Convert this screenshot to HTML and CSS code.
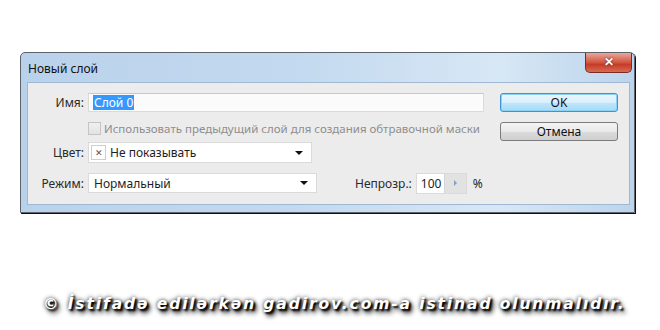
FILE: index.html
```html
<html lang="ru">
	<head>
		<meta charset="UTF-8">
		<meta name="viewport" content="width=device-width, initial-scale=1">
		<title>Новый слой</title>
		<link rel="stylesheet" href="styles.css">
	</head>
	<body>
		<div class="window">
			<div class="titlebar">
				<span class="title">Новый слой</span>
				<span class="close">&#x2715;</span>
			</div>
			<div class="client">
				<div class="form">
					<div class="row row-name">
						<label class="lbl" for="name">Имя:</label>
						<div class="field name-field" id="name"><span class="sel">Слой 0</span></div>
					</div>
					<div class="row row-check">
						<span class="lbl"></span>
						<span class="check"></span>
						<span class="check-text">Использовать предыдущий слой для создания обтравочной маски</span>
					</div>
					<div class="row row-color">
						<span class="lbl">Цвет:</span>
						<div class="field select color-select">
							<span class="swatch">&#x2715;</span>
							<span class="value">Не показывать</span>
							<span class="arrow"></span>
						</div>
					</div>
					<div class="row row-mode">
						<span class="lbl">Режим:</span>
						<div class="field select mode-select">
							<span class="value">Нормальный</span>
							<span class="arrow"></span>
						</div>
						<span class="op-lbl">Непрозр.:</span>
						<div class="field opacity">
							<span class="num">100</span>
							<span class="step"><span class="tri"></span></span>
						</div>
						<span class="pct">%</span>
					</div>
				</div>
				<div class="buttons">
					<button class="btn btn-ok" type="button">OK</button>
					<button class="btn" type="button">Отмена</button>
				</div>
			</div>
		</div>
		<p class="mark">© İstifadə edilərkən gadirov.com-a istinad olunmalıdır.</p>
	</body>
</html>
```

FILE: styles.css
```css
body {
	margin: 0;
	background: #fff;
	font-family: "Noto Sans", sans-serif;
	font-size: 12px;
	color: #1e1e1e;
}
.window {
	width: 613px;
	height: 159px;
	margin: 52px 0 0 20px;
	border: 1px solid #5e636b;
	border-radius: 5px 5px 0 0;
	background: linear-gradient(to right, #b9d2eb, #c3d9ef 45%, #d7e7f5 78%, #bcd4ec);
	box-shadow: 1px 1px 0 #111;
	display: flex;
	flex-direction: column;
}
.titlebar {
	height: 29px;
	display: flex;
	align-items: flex-start;
	justify-content: space-between;
}
.title {
	margin: 7px 0 0 7px;
	font-size: 12px;
	color: #111;
}
.close {
	width: 45px;
	height: 19px;
	margin-right: 2px;
	border: 1px solid #7a2c24;
	border-top: 0;
	border-radius: 0 0 5px 5px;
	background: linear-gradient(#e9a79c, #d2553f 50%, #c43c27 60%, #d86a52);
	color: #fff;
	font-size: 12px;
	font-weight: bold;
	text-align: center;
	line-height: 18px;
	text-shadow: 0 0 2px #5a1a12;
}
.client {
	flex: 1;
	margin: 0 4px 7px 6px;
	border: 1px solid #9fb8d3;
	background: #ececec;
	display: flex;
}
.form {
	padding-top: 10px;
	width: 456px;
}
.row {
	display: flex;
	align-items: center;
}
.lbl {
	flex-shrink: 0;
	width: 56px;
	margin-right: 4px;
	text-align: right;
	color: #2a2a2a;
}
.field {
	flex-shrink: 0;
	background: #fff;
	border: 1px solid #dadada;
	box-sizing: border-box;
	display: flex;
	align-items: center;
}
.row-name {
	height: 19px;
}
.name-field {
	width: 396px;
	height: 19px;
	border-top-color: #c8c8c8;
	background: #fbfbfb;
	padding-left: 4px;
}
.sel {
	background: #3399ff;
	color: #fff;
	padding: 0 1px;
	line-height: 15px;
}
.row-check {
	height: 14px;
	margin-top: 9px;
}
.check {
	flex-shrink: 0;
	width: 11px;
	height: 11px;
	border: 1px solid #c4c4c4;
	background: linear-gradient(#f1f1f1, #e2e2e2);
	margin-right: 3px;
}
.check-text {
	font-size: 11.5px;
	color: #8e8e8e;
	white-space: nowrap;
}
.row-color {
	height: 21px;
	margin-top: 7px;
}
.select {
	height: 21px;
	padding: 0 8px 0 5px;
}
.color-select {
	width: 224px;
	padding-left: 2px;
}
.swatch {
	width: 13px;
	height: 13px;
	border: 1px solid #cfcfcf;
	font-size: 9px;
	line-height: 13px;
	text-align: center;
	color: #555;
	margin-right: 4px;
}
.value {
	flex: 1;
}
.arrow {
	width: 0;
	height: 0;
	border-left: 4px solid transparent;
	border-right: 4px solid transparent;
	border-top: 4px solid #111;
}
.row-mode {
	height: 20px;
	margin-top: 10px;
}
.mode-select {
	width: 229px;
	height: 20px;
}
.op-lbl {
	margin-left: 38px;
	margin-right: 4px;
	color: #2a2a2a;
}
.opacity {
	width: 51px;
	height: 21px;
}
.num {
	flex: 1;
	padding-left: 4px;
}
.step {
	width: 21px;
	height: 19px;
	background: #e2e2e2;
	border-left: 1px solid #d4d4d4;
	display: flex;
	align-items: center;
	justify-content: center;
}
.tri {
	border-top: 3px solid transparent;
	border-bottom: 3px solid transparent;
	border-left: 3px solid #8aa0c0;
}
.pct {
	margin-left: 6px;
}
.buttons {
	padding: 10px 0 0 16px;
	display: flex;
	flex-direction: column;
	gap: 10px;
}
.btn {
	width: 118px;
	height: 19px;
	padding: 0;
	border: 1px solid #7b7b7b;
	border-radius: 3px;
	background: linear-gradient(#f4f4f4, #e9e9e9 50%, #dadada 52%, #cfcfcf);
	font-family: "Noto Sans", sans-serif;
	font-size: 12px;
	color: #111;
}
.btn-ok {
	border-color: #3c94d0;
	box-shadow: inset 0 0 0 1px #8ad3f6;
	background: linear-gradient(#eaf6fd, #d9f0fc 50%, #bee6fd 52%, #a7d9f5);
}
.mark {
	margin: 82px 0 0 43px;
	font-family: "DejaVu Sans", sans-serif;
	font-size: 15.5px;
	font-weight: bold;
	font-style: italic;
	letter-spacing: 1.9px;
	color: #fff;
	white-space: nowrap;
	text-shadow: 2px 2px 2px #000, 3px 4px 5px #000, 0 0 4px #222;
}
```
